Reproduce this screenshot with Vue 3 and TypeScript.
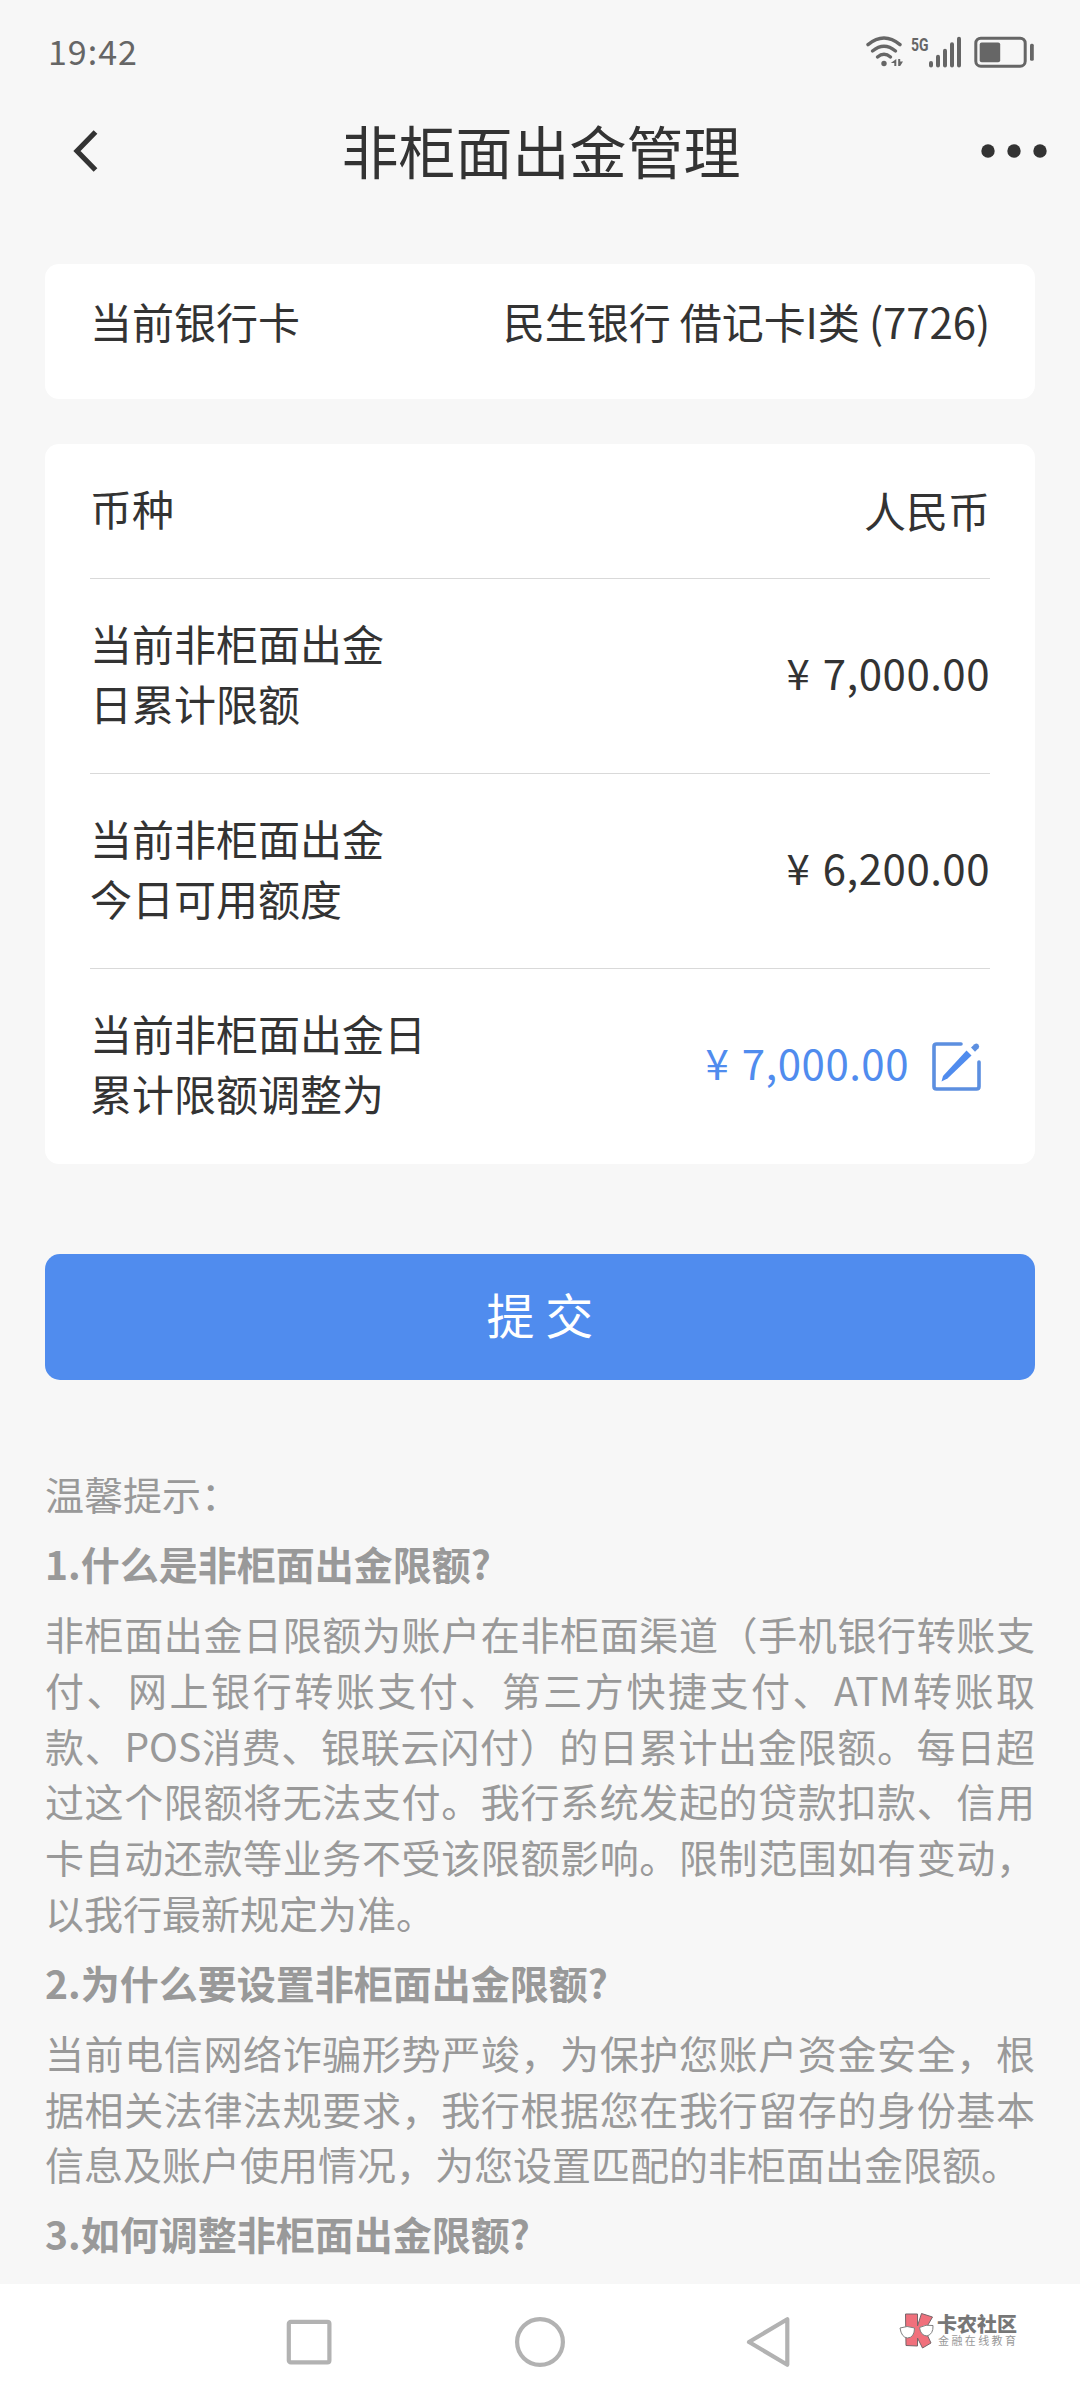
<script setup lang="ts">
interface LimitRow {
  label: string[]
  amount: string
  editable?: boolean
}
interface Tip {
  title: string
  lines: string[]
}

const rows: LimitRow[] = [
  { label: ['当前非柜面出金', '日累计限额'], amount: '7,000.00' },
  { label: ['当前非柜面出金', '今日可用额度'], amount: '6,200.00' },
  { label: ['当前非柜面出金日', '累计限额调整为'], amount: '7,000.00', editable: true },
]

const tips: Tip[] = [
  {
    title: '1.什么是非柜面出金限额?',
    lines: [
      '非柜面出金日限额为账户在非柜面渠道（手机银行转账支',
      '付、网上银行转账支付、第三方快捷支付、ATM转账取',
      '款、POS消费、银联云闪付）的日累计出金限额。每日超',
      '过这个限额将无法支付。我行系统发起的贷款扣款、信用',
      '卡自动还款等业务不受该限额影响。限制范围如有变动，',
      '以我行最新规定为准。',
    ],
  },
  {
    title: '2.为什么要设置非柜面出金限额?',
    lines: [
      '当前电信网络诈骗形势严竣，为保护您账户资金安全，根',
      '据相关法律法规要求，我行根据您在我行留存的身份基本',
      '信息及账户使用情况，为您设置匹配的非柜面出金限额。',
    ],
  },
  { title: '3.如何调整非柜面出金限额?', lines: [] },
]
</script>

<template>
  <div class="screen">
    <header class="status">
      <span class="time">19:42</span>
      <svg class="status-icons" width="170" height="36" viewBox="865 34 170 36">
        <g fill="none" stroke="#666" stroke-width="3.400" stroke-linecap="round">
          <path d="M868 44.600Q884 31.500 900 44.600" />
          <path d="M872.500 51Q884 41.500 895.500 51" />
          <path d="M877.500 57Q884 51.500 890.500 57" />
        </g>
        <circle cx="884" cy="63.500" r="2.700" fill="#666" />
        <path d="M896.300 59v7h-2v-3h-3.500zM898.200 59h2v2.500h2.800l-2.800 4.500h-2z" fill="#666" />
        <text x="911" y="50.500" class="net" textLength="17.500" lengthAdjust="spacingAndGlyphs">5G</text>
        <g stroke="#666" stroke-width="4" stroke-linecap="round">
          <path d="M931 63v2.500M938 56.700v8.800M945 50.700v14.800M952 44.300v21.200M959 38.700v26.800" />
        </g>
        <rect x="975.800" y="38.200" width="49.400" height="28" rx="5" fill="none" stroke="#666" stroke-width="3" />
        <rect x="979.700" y="42.600" width="20.500" height="19.600" rx="2" fill="#666" />
        <rect x="1030" y="43.700" width="3.800" height="17" rx="1.500" fill="#666" />
      </svg>
    </header>

    <nav class="titlebar">
      <svg width="32" height="48" viewBox="0 0 32 48">
        <path d="M25.500 5 7 24 25.500 43" fill="none" stroke="#333" stroke-width="5.200" />
      </svg>
      <h1>非柜面出金管理</h1>
      <svg width="68" height="16" viewBox="0 0 68 16" fill="#333">
        <circle cx="8" cy="8" r="6.700" />
        <circle cx="34" cy="8" r="6.700" />
        <circle cx="60" cy="8" r="6.700" />
      </svg>
    </nav>

    <main>
      <section class="card bank">
        <span>当前银行卡</span>
        <span class="bank-name">民生银行 借记卡I类 (7726)</span>
      </section>

      <section class="card limits">
        <div class="row currency">
          <span class="label">币种</span>
          <span class="value">人民币</span>
        </div>
        <div v-for="(row, i) in rows" :key="i" class="row">
          <div class="label">
            <div v-for="line in row.label" :key="line">{{ line }}</div>
          </div>
          <div class="amount" :class="{ editable: row.editable }">
            <span class="yen">¥</span><span class="num">{{ row.amount }}</span>
            <svg v-if="row.editable" class="edit" width="52" height="52" viewBox="0 0 52 52">
              <path d="M31 4H6.500Q4 4 4 6.500V46.500Q4 49 6.500 49H46.500Q49 49 49 46.500V22" fill="none" stroke="#5c8fe0" stroke-width="3.600" stroke-linecap="round" />
              <path d="M36.500 10.500 41.500 15.500 17.500 38.500 11.500 41.500 13 36z" fill="#508cee" />
              <path d="M41 7.500 44.500 4.200Q46.500 2.600 48.300 4.400T48.500 8.300L45 11.800z" fill="#5c8fe0" />
            </svg>
          </div>
        </div>
      </section>

      <button class="submit">提 交</button>

      <section class="tips">
        <p>温馨提示：</p>
        <template v-for="tip in tips" :key="tip.title">
          <h2>{{ tip.title }}</h2>
          <div v-if="tip.lines.length" class="para">
            <div v-for="line in tip.lines" :key="line" class="line">{{ line }}</div>
          </div>
        </template>
      </section>
    </main>

    <footer class="navbar">
      <svg width="50" height="54" viewBox="0 0 50 54">
        <rect x="4.800" y="6.800" width="40.600" height="40.600" rx="2" />
      </svg>
      <svg width="54" height="54" viewBox="0 0 54 54">
        <circle cx="27" cy="27" r="22.900" />
      </svg>
      <svg width="50" height="54" viewBox="0 0 50 54">
        <path d="M43.300 4.200V49.800L5 27z" stroke-linejoin="round" />
      </svg>
      <div class="mark">
        <svg class="mark-logo" width="36" height="38" viewBox="0 0 36 38">
          <path d="M6.500 2H18.500V14L22.500 1.500 33.500 5 26 18 32 31 23.500 36 18.500 26V34L7 33.500z" fill="#f0707c" stroke="#77656a" stroke-width="1" />
          <g fill="#fff" stroke="#808080" stroke-width="1">
            <path d="M1 16Q8 13 15.500 16 15.500 25.500 8.500 26 2.500 25.500 1 16z" />
            <path d="M20.500 15.500Q27 12 34 13.500 34.500 22 28 24 21.500 23.500 20.500 15.500z" />
          </g>
        </svg>
        <div class="mark-text">
          <b>卡农社区</b>
          <span>金融在线教育</span>
        </div>
      </div>
    </footer>
  </div>
</template>

<style>
body {
  margin: 0;
  background: #f7f7f7;
}
</style>

<style scoped>
.screen {
  width: 1080px;
  height: 2400px;
  display: flex;
  flex-direction: column;
  overflow: hidden;
  background: #f7f7f7;
  color: #333;
  font-family: 'Noto Sans CJK SC', sans-serif;
}
.status {
  height: 104px;
  padding: 0 45px 0 48px;
  display: flex;
  align-items: center;
  justify-content: space-between;
  box-sizing: border-box;
}
.time {
  margin-top: -2px;
  font-size: 34px;
  line-height: 50px;
  color: #666;
  letter-spacing: 1px;
}
.net {
  font: 700 18px Roboto, sans-serif;
  fill: #666;
}
.titlebar {
  height: 94px;
  margin-bottom: 66px;
  padding: 0 32px 0 70px;
  display: flex;
  align-items: center;
  justify-content: space-between;
}
h1 {
  margin: -5px 0 0;
  font-size: 57px;
  line-height: 84px;
  font-weight: 400;
}
main {
  flex: 1;
  padding: 0 45px;
  font-size: 42px;
  line-height: 60px;
}
.card {
  background: #fff;
  border-radius: 14px;
  padding: 0 45px;
}
.bank {
  height: 135px;
  padding-top: 27px;
  box-sizing: border-box;
  display: flex;
  justify-content: space-between;
}
.bank-name {
  letter-spacing: -0.1px;
}
.limits {
  margin-top: 45px;
  height: 720px;
}
.row {
  height: 195px;
  box-sizing: border-box;
  display: flex;
  align-items: center;
  justify-content: space-between;
}
.row + .row {
  border-top: 1px solid #d9d9d9;
}
.currency {
  height: 134px;
}
.label {
  margin-top: -7px;
}
.value {
  margin-top: -3px;
}
.amount {
  display: flex;
  align-items: center;
  margin-top: -9px;
}
.num {
  letter-spacing: 0.5px;
}
.yen {
  margin-right: 13px;
}
.editable {
  color: #508cee;
}
.edit {
  margin: 9px 8px 0 21px;
}
.submit {
  display: block;
  width: 990px;
  height: 126px;
  margin: 90px 0 0;
  padding: 0 0 8px;
  border: 0;
  border-radius: 15px;
  background: #508cee;
  color: #fff;
  font: 400 48px/70px 'Noto Sans CJK SC', sans-serif;
}
.tips {
  margin-top: 86px;
  font-size: 39px;
  line-height: 55.65px;
  color: #999;
}
.tips p,
.tips h2,
.para {
  margin: 0 0 14.5px;
  font-size: 39px;
}
.tips h2 {
  font-weight: 700;
}
.line {
  white-space: nowrap;
  text-align: justify;
  text-align-last: justify;
}
.line:last-child {
  text-align-last: left;
}
.navbar {
  height: 116px;
  background: #fff;
  display: flex;
  align-items: center;
  padding-left: 284px;
}
.navbar > svg {
  fill: none;
  stroke: #b2b2b2;
  stroke-width: 4.2;
  margin-right: 179px;
}
.navbar > svg:nth-of-type(2) {
  margin-right: 177px;
}
.navbar > svg:nth-of-type(3) {
  margin-right: 105px;
}
.mark {
  display: flex;
  align-items: center;
  gap: 2px;
  margin-top: -23px;
}
.mark-text {
  display: flex;
  flex-direction: column;
  color: #777;
  white-space: nowrap;
}
.mark-text b {
  font-size: 20px;
  line-height: 19px;
  font-weight: 900;
}
.mark-text span {
  font-size: 11px;
  line-height: 14px;
  letter-spacing: 2.4px;
  color: #999;
  padding-left: 1px;
}
</style>
